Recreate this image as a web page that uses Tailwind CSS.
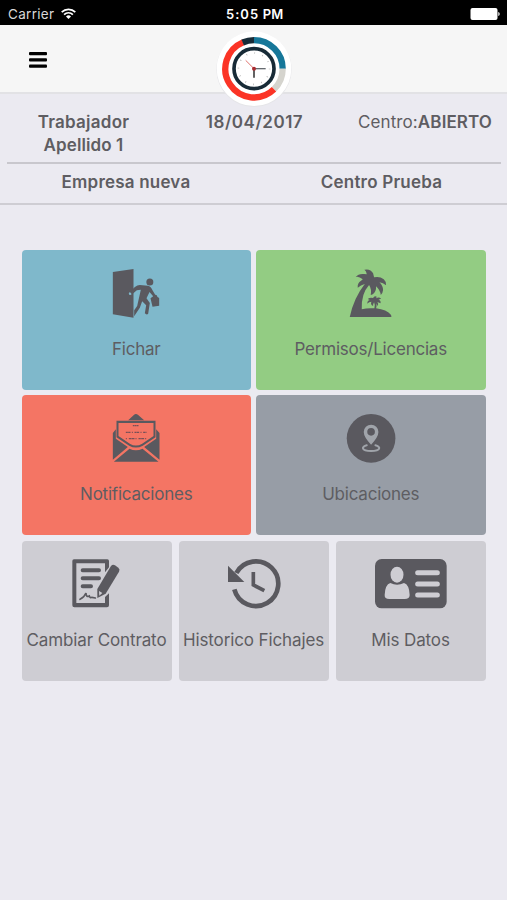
<!DOCTYPE html>
<html lang="es">
<head>
<meta charset="utf-8">
<title>Control horario</title>
<script src="https://cdn.jsdelivr.net/npm/@tailwindcss/browser@4"></script>
</head>
<body class="bg-[#ebeaf1] font-['Inter',sans-serif] text-[#5e5d62] w-[507px] h-[900px] overflow-hidden">
<!-- Status bar -->
<div class="h-[25px] bg-black text-white flex items-center justify-between relative pl-2 pr-[7px] pt-[2px]">
  <div class="flex items-center gap-[7px]">
    <span class="text-[13.5px] leading-5 text-[#d8d8d8] tracking-[0.3px]">Carrier</span>
    <svg class="w-[15px] h-[11px]" viewBox="0 0 15 11" fill="none" stroke="#fff" stroke-width="1.7"><path d="M.7 4.1a9.7 9.7 0 0 1 13.6 0M3.1 6.6a6.2 6.2 0 0 1 8.8 0"/><path d="M7.5 11 5 8.5a3.6 3.6 0 0 1 5 0z" fill="#fff" stroke="none"/></svg>
  </div>
  <span class="absolute left-[226px] text-[13px] leading-5 font-semibold tracking-[1px] whitespace-nowrap">5:05<span class="tracking-[0.3px]"> PM</span></span>
  <svg class="w-[30px] h-[12px]" viewBox="0 0 30 12" fill="#fff"><rect x="0.5" width="27" height="12" rx="2"/><path d="M28.3 4c1.8.6 1.8 3.400 0 4z"/></svg>
</div>
<!-- Header -->
<header class="h-[69px] bg-[#f6f6f6] border-b-2 border-[#e2e2e5] relative flex items-center pl-[29px] pt-[2px]">
  <svg class="w-[18px] h-[16px]" viewBox="0 0 18 16" fill="#000"><rect width="18" height="3.300" rx="1"/><rect y="6.200" width="18" height="3.300" rx="1"/><rect y="12.400" width="18" height="3.300" rx="1"/></svg>
  <svg class="absolute left-[205px] top-0 w-[100px] h-[85px]" viewBox="0 0 300 255" fill="none">
    <circle cx="147" cy="133" r="113" fill="#e5e5e8"/><circle cx="147" cy="131" r="112" fill="#fff"/>
    <g stroke-width="19"><path d="M147 45.500A86 86 0 0 1 233 131.500" stroke="#167799"/><path d="M233 131.500A86 86 0 0 1 207 193" stroke="#d5d4ce"/><path d="M207 193A86 86 0 1 1 114 52" stroke="#fb3426"/><path d="M113 52.500A86 86 0 0 1 147 45.500" stroke="#182b37"/></g>
    <circle cx="147" cy="131" r="60" stroke="#182b37" stroke-width="11"/>
    <circle cx="147" cy="131" r="47" stroke="#aaa" stroke-width="5" stroke-dasharray="2 22.600"/>
    <path d="M147 131h35" stroke="#666b70" stroke-width="4"/><path d="M147 131v27" stroke="#444" stroke-width="5"/><path d="M147 131 122 106" stroke="#d9564f" stroke-width="2.500"/>
    <circle cx="147" cy="131" r="6" fill="#a82c30"/>
  </svg>
</header>
<!-- Worker details -->
<section class="h-[111px] border-b-2 border-[#cecdd3] px-[7px] text-[17px] leading-[23px] font-semibold">
  <div class="h-[70px] w-[494px] border-b-2 border-[#c8c7cd] pt-[17px] flex">
    <div class="w-[153px] text-center"><span class="tracking-[0.25px]">Trabajador</span><br><span class="tracking-[0.1px]">Apellido 1</span></div>
    <div class="w-[189px] text-center tracking-[0.5px]">18/04/2017</div>
    <div class="w-[152px] text-center whitespace-nowrap tracking-[0.1px]"><span class="font-normal">Centro:</span><span>ABIERTO</span></div>
  </div>
  <div class="flex pt-[7px] tracking-[0.2px]">
    <div class="w-[238px] shrink-0 text-center">Empresa nueva</div>
    <div class="w-[273px] shrink-0 text-center">Centro Prueba</div>
  </div>
</section>
<!-- Menu tiles -->
<main class="px-[21.500px] pt-[45px] flex flex-col gap-[5px] text-[17px] leading-6 text-[#5e5d62]">
  <div class="grid grid-cols-2 gap-[5px] tracking-[-0.22px]">
    <div class="h-[140px] rounded-[4px] bg-[#7fb8cb] pt-[5px] flex flex-col items-center">
      <svg class="w-[80px] h-[75px]" viewBox="4.5 0 240 225" fill="#5a595f"><path d="M55 51 117 42V188L55 178z"/><circle cx="107" cy="116" r="4" fill="#7fb8cb"/><circle cx="166" cy="81" r="10.500"/><path d="M107 112Q121 91 136 90L160 92Q170 94 174 106L182 119Q187 118 189 126L194 129 194 152 174 155 168 130 176 124 165 111 156 130 166 144 161 176Q157 181 151 175L155 151 143 139 136 158 119 184 119 166 128 153 139 104 127 106 113 118z"/></svg>
      <span class="mt-[7px]">Fichar</span>
    </div>
    <div class="h-[140px] rounded-[4px] bg-[#93cc83] pt-[5px] flex flex-col items-center">
      <svg class="w-[80px] h-[75px]" viewBox="3.75 0 240 225" fill="#5a595f"><path d="M60 186Q72 129 105 87Q93 90 84 98Q82 84 94 77L99 73Q87 63 78 66Q86 55 103 57L111 58Q110 48 104 44Q122 40 130 55L133 67Q150 63 162 73Q170 80 169 91Q160 83 149 82Q160 93 160 105Q159 115 153 120Q151 105 139 94Q140 110 129 118Q125 120 123 120Q126 102 118 90Q94 116 96 163Q114 158 134 160Q137 150 133 142Q129 148 130 153Q121 148 125 140Q117 140 113 146Q112 137 120 135L114 132Q121 126 130 129Q133 122 141 125L139 130Q148 124 154 131L146 134Q155 137 152 145L143 141Q148 148 143 153L139 145Q142 154 139 160Q171 164 184 180L185 186z"/></svg>
      <span class="mt-[7px]">Permisos/Licencias</span>
    </div>
    <div class="h-[140px] rounded-[4px] bg-[#f47564] pt-[5px] flex flex-col items-center">
      <svg class="w-[80px] h-[75px]" viewBox="4.5 0 240 225" fill="#5a595f"><path d="M101 61 118 45Q124 39 131 45L149 61z"/><path d="M66 62H183V112L145 137Q124 148 104 137L66 112zM72 69V108L106 131Q124 142 143 131L177 108V69z" fill-rule="evenodd"/><path d="M64 88V116L100 141 55 179V99zM185 88V116L149 141 195 179V99zM58 185 105 146Q124 155 144 146L192 185z"/><g fill="none" stroke="#775057" stroke-width="4"><path d="M115 77h18" stroke-dasharray="5 1"/><path d="M94 97h62" stroke-dasharray="6 1 7 4 3 5"/><path d="M94 116h62" stroke-dasharray="3 6 7 1 9 3"/></g></svg>
      <span class="mt-[7px]">Notificaciones</span>
    </div>
    <div class="h-[140px] rounded-[4px] bg-[#979da6] pt-[5px] flex flex-col items-center">
      <svg class="w-[80px] h-[75px]" viewBox="3.75 0 240 225"><circle cx="124" cy="115" r="73" fill="#5a595f"/><path d="M124 134Q102 111 102 96A22 22 0 0 1 146 96Q146 111 124 134zM124 84a11.500 11.500 0 1 0 0 23a11.500 11.500 0 1 0 0-23z" fill="#a0a4aa" fill-rule="evenodd"/><path d="M111 136C94 140 94 152 124 153C154 152 154 140 137 136" fill="none" stroke="#a0a4aa" stroke-width="6" stroke-linecap="round"/></svg>
      <span class="mt-[7px]">Ubicaciones</span>
    </div>
  </div>
  <div class="grid grid-cols-3 gap-[7px] pt-[0.500px] tracking-[-0.12px]">
    <div class="h-[140px] rounded-[4px] bg-[#cecdd3] pt-[4px] flex flex-col items-center whitespace-nowrap">
      <svg class="w-[80px] h-[75px]" viewBox="6 0 240 225" fill="#5a595f"><path d="M57 43H157Q162 43 162 48V67L150 82V55H64V174H150V156L162 145V181Q162 187 156 187H58Q52 187 52 181V48Q52 43 57 43z"/><g fill="none" stroke="#5a595f" stroke-linecap="round" stroke-width="12"><path d="M83 76H132M83 100H132M83 124H108"/><path d="M75 163Q88 157 93 144Q93 158 103 153Q105 160 111 157L121 159" stroke-width="5"/></g><path d="M168 63Q173 57 180 61L190 68Q196 73 192 80L152 146 127 159 127 132z"/><path d="M132 138 142 144 133 152z" fill="#cecdd3"/></svg>
      <span class="mt-[8px]">Cambiar Contrato</span>
    </div>
    <div class="h-[140px] rounded-[4px] bg-[#cecdd3] pt-[4px] flex flex-col items-center whitespace-nowrap">
      <svg class="w-[80px] h-[75px]" viewBox="-3 0 240 225" fill="none" stroke="#5a595f" stroke-width="14"><path d="M64 84A67 67 0 1 1 58 133" /><path d="M115 81V120L148 137" stroke-width="11"/><path d="M39 62 88 111H39z" fill="#5a595f" stroke="none"/></svg>
      <span class="mt-[8px]">Historico Fichajes</span>
    </div>
    <div class="h-[140px] rounded-[4px] bg-[#cecdd3] pt-[4px] flex flex-col items-center whitespace-nowrap">
      <svg class="w-[80px] h-[75px]" viewBox="18 0 240 225"><rect x="30" y="42" width="215" height="148" rx="20" fill="#5a595f"/><g fill="#cecdd3"><ellipse cx="96" cy="89" rx="19.500" ry="24"/><path d="M76 114Q96 125 117 114Q133 119 134 150Q134 162 119 162H73Q58 162 59 150Q60 119 76 114z"/></g><path d="M158 83H217M158 117H217M158 150H217" stroke="#cecdd3" stroke-width="15" stroke-linecap="round"/></svg>
      <span class="mt-[8px]">Mis Datos</span>
    </div>
  </div>
</main>
</body>
</html>
